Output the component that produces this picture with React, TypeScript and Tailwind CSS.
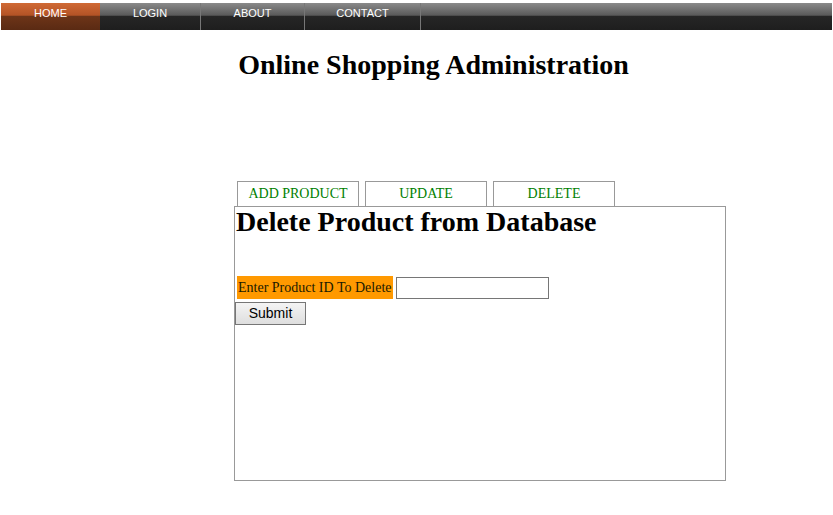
const navItems = [
  { label: "HOME", width: "w-[99px]", active: true },
  { label: "LOGIN", width: "w-[101px]" },
  { label: "ABOUT", width: "w-[104px]" },
  { label: "CONTACT", width: "w-[116px]" },
];

const tabs = ["ADD PRODUCT", "UPDATE", "DELETE"];

export default function App() {
  return (
    <div className="min-h-[515px] w-[833px] bg-white font-['Liberation_Serif',serif] text-black">
      {/* top nav */}
      <div className="pt-[3px] pl-[1px] pr-[1px]">
        <nav className="flex h-[27px] bg-[linear-gradient(to_bottom,#8a8a8a_0%,#5a5a5a_45%,#262626_50%,#1e1e1e_100%)]">
          {navItems.map((item) => (
            <a
              key={item.label}
              href="#"
              className={`${item.width} flex items-center justify-center border-r border-[#777] pb-[6px] font-['Liberation_Sans',sans-serif] text-[11px] text-white ${
                item.active
                  ? "bg-[linear-gradient(to_bottom,#d06a35_0%,#b45326_45%,#6d3418_50%,#5a2a13_100%)] border-r-0"
                  : ""
              }`}
            >
              {item.label}
            </a>
          ))}
        </nav>
      </div>

      <h1 className="mt-[17px] pl-[34px] text-center text-[28px] font-bold leading-[36px]">
        Online Shopping Administration
      </h1>

      <div className="ml-[234px] mt-[98px] w-[492px]">
        <div className="flex gap-[6px] pl-[3px]">
          {tabs.map((t) => (
            <div
              key={t}
              className="h-[25px] w-[122px] border border-b-0 border-[#999] text-center text-[14px] leading-[23px] text-[#008000]"
            >
              {t}
            </div>
          ))}
        </div>
        <div className="h-[275px] border border-[#999]">
          <h2 className="pl-[1px] text-[28px] font-bold leading-[30px]">
            Delete Product from Database
          </h2>
          <div className="mt-[39px] flex items-center gap-[3px] pl-[2px]">
            <span className="bg-[#ff9900] px-[1px] text-[14px] leading-[23px] text-[#1a1a00]">
              Enter Product ID To Delete
            </span>
            <input
              type="text"
              className="h-[22px] w-[153px] border border-[#767676] bg-white"
            />
          </div>
          <button className="mt-[3px] h-[23px] w-[71px] border border-[#767676] bg-[linear-gradient(to_bottom,#f4f4f4,#dedede)] font-['Liberation_Sans',sans-serif] text-[14px] text-black">
            Submit
          </button>
        </div>
      </div>
    </div>
  );
}
